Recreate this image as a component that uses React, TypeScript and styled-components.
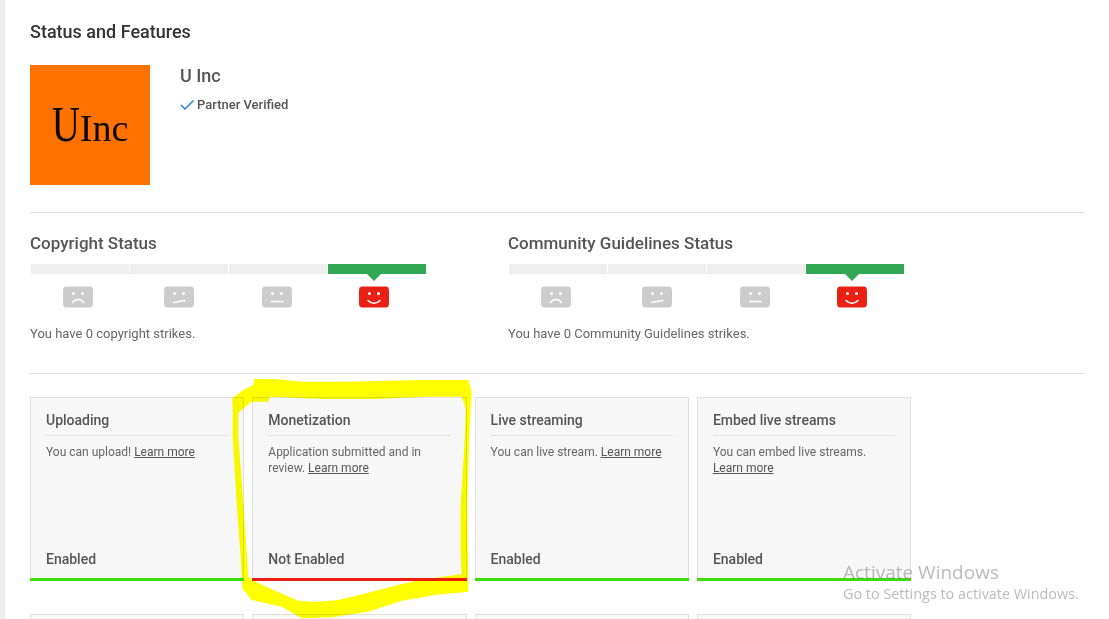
import React from "react";
import styled, { createGlobalStyle } from "styled-components";

const GlobalStyle = createGlobalStyle`
  html, body {
    margin: 0;
    padding: 0;
    height: 619px;
    overflow: hidden;
    background: #fff;
    font-family: Roboto, "Liberation Sans", sans-serif;
    color: #555;
  }
`;

const Page = styled.div`
  position: relative;
  width: 1109px;
  height: 619px;
  overflow: hidden;
  box-sizing: border-box;
  border-left: 5px solid #eeeeee;
  padding: 0 25px 0 25px;
`;

const PageTitle = styled.h1`
  margin: 0;
  padding-top: 22px;
  font-size: 18px;
  line-height: 20px;
  font-weight: 500;
  color: #333;
`;

const Profile = styled.div`
  display: flex;
  gap: 30px;
  margin-top: 23px;
  padding-bottom: 27px;
  border-bottom: 1px solid #e0e0e0;
`;

const Logo = styled.div`
  width: 120px;
  height: 120px;
  background: #ff7200;
  display: flex;
  align-items: baseline;
  justify-content: center;
  padding-top: 37px;
  box-sizing: border-box;
  font-family: "Liberation Serif", serif;
  color: #0a0500;
  line-height: 52px;
`;

const LogoBig = styled.span`
  display: inline-block;
  font-size: 39px;
  transform: scaleY(1.3);
  transform-origin: 50% 38px;
`;

const LogoSmall = styled.span`
  font-size: 38px;
`;

const ProfileInfo = styled.div`
  padding-top: 1px;
`;

const ChannelName = styled.div`
  font-size: 18px;
  line-height: 20px;
  font-weight: 500;
  color: #555;
`;

const Verified = styled.div`
  display: flex;
  align-items: center;
  gap: 3px;
  margin-top: 10px;
  font-size: 13px;
  line-height: 18px;
  font-weight: 500;
  color: #555;
`;

const StatusRow = styled.div`
  display: grid;
  grid-template-columns: 478px 1fr;
  padding-top: 20px;
  height: 140px;
  border-bottom: 1px solid #e0e0e0;
`;

const StatusTitle = styled.h2`
  margin: 0;
  font-size: 17px;
  line-height: 20px;
  font-weight: 500;
  color: #555;
`;

const Meter = styled.div`
  display: grid;
  grid-template-columns: repeat(4, 98px);
  gap: 1px;
  margin: 11px 0 0 1px;
`;

const Segment = styled.div<{ $active?: boolean }>`
  position: relative;
  height: 10px;
  background: ${(p) => (p.$active ? "#33a854" : "#eeeeee")};

  ${(p) =>
    p.$active &&
    `&::after {
      content: "";
      position: absolute;
      left: 39px;
      top: 10px;
      border-left: 7px solid transparent;
      border-right: 7px solid transparent;
      border-top: 7px solid #33a854;
    }`}
`;

const Faces = styled.div`
  display: flex;
  margin-top: 12px;
  height: 22px;
`;

const Face = styled.svg<{ $gap: number }>`
  width: 30px;
  height: 22px;
  margin-left: ${(p) => p.$gap}px;
  flex: none;
`;

const StatusText = styled.p`
  margin: 18px 0 0;
  font-size: 13px;
  line-height: 16px;
  color: #666;
`;

const Cards = styled.div`
  display: grid;
  grid-template-columns: repeat(4, 214.3px);
  gap: 33px 8px;
  margin-top: 23px;
`;

const Card = styled.div`
  box-sizing: border-box;
  height: 184px;
  display: flex;
  flex-direction: column;
  padding: 0 15px;
  background: #f7f7f7;
  border: 1px solid #e0e0e0;
  border-bottom: none;
`;

const CardFooter = styled.div<{ $ok: boolean }>`
  margin: auto -16px 0;
  padding: 0 16px 10px;
  font-size: 14px;
  line-height: 18px;
  font-weight: 500;
  color: #555;
  border-bottom: 3px solid ${(p) => (p.$ok ? "#3ddc0a" : "#ee1c12")};
`;

const CardTitle = styled.div`
  padding: 13px 0 6px;
  font-size: 14px;
  line-height: 18px;
  font-weight: 500;
  color: #555;
  border-bottom: 1px solid #e3e3e3;
`;

const CardText = styled.p`
  margin: 8px 0 0;
  font-size: 12px;
  line-height: 16px;
  color: #666;
`;

const LearnMore = styled.a`
  color: #555;
  text-decoration: underline;
  cursor: pointer;
`;

const Highlight = styled.svg`
  position: absolute;
  left: 215px;
  top: 370px;
  width: 280px;
  height: 249px;
  pointer-events: none;
  mix-blend-mode: multiply;
`;

const Watermark = styled.div`
  position: absolute;
  left: 838px;
  top: 561px;
  color: rgba(120, 120, 120, 0.5);
  pointer-events: none;
`;

const WatermarkTitle = styled.div`
  font-family: "Open Sans", "Liberation Sans", sans-serif;
  font-size: 19px;
  line-height: 22px;
`;

const WatermarkText = styled.div`
  font-family: "Open Sans", "Liberation Sans", sans-serif;
  font-size: 14.4px;
  line-height: 20px;
  margin-top: 1px;
  white-space: nowrap;
`;

const FACE_BODY =
  "M3 0.5H27C28.6 0.5 29.6 1.6 29.8 3C30.2 8 30.2 14 29.8 19C29.6 20.4 28.6 21.5 27 21.5H3C1.4 21.5 0.4 20.4 0.2 19C-0.2 14 -0.2 8 0.2 3C0.4 1.6 1.4 0.5 3 0.5Z";

const mouths = [
  "M9.5 16.5C12 12.5 18 12.5 20.5 16.5",
  "M9.5 16.5L21 14.5",
  "M9.5 15.5H21",
  "M9 14.5C12 18 18 18 21 14.5",
];

const faceGaps = [33, 71, 68, 67];

const StrikeFace = ({ index }: { index: number }) => (
  <Face viewBox="0 0 30 22" $gap={faceGaps[index]}>
    <path d={FACE_BODY} fill={index === 3 ? "#ea2014" : "#cccccc"} />
    <circle cx="10.5" cy="7.5" r="1.5" fill="#fff" />
    <circle cx="19.5" cy="7.5" r="1.5" fill="#fff" />
    <path d={mouths[index]} fill="none" stroke="#fff" strokeWidth="1.5" strokeLinecap="round" />
  </Face>
);

const StatusBlock = ({ title, text }: { title: string; text: string }) => (
  <div>
    <StatusTitle>{title}</StatusTitle>
    <Meter>
      <Segment />
      <Segment />
      <Segment />
      <Segment $active />
    </Meter>
    <Faces>
      {[0, 1, 2, 3].map((i) => (
        <StrikeFace key={i} index={i} />
      ))}
    </Faces>
    <StatusText>{text}</StatusText>
  </div>
);

const cards = [
  { title: "Uploading", text: "You can upload! ", status: "Enabled", ok: true },
  { title: "Monetization", text: "Application submitted and in review. ", status: "Not Enabled", ok: false },
  { title: "Live streaming", text: "You can live stream. ", status: "Enabled", ok: true },
  { title: "Embed live streams", text: "You can embed live streams. ", status: "Enabled", ok: true },
];

export default function App() {
  return (
    <Page>
      <GlobalStyle />
      <PageTitle>Status and Features</PageTitle>
      <Profile>
        <Logo>
          <LogoBig>U</LogoBig>
          <LogoSmall>Inc</LogoSmall>
        </Logo>
        <ProfileInfo>
          <ChannelName>U Inc</ChannelName>
          <Verified>
            <svg width="14" height="12" viewBox="0 0 14 12">
              <path d="M1 6L5 10L13.5 1.5" fill="none" stroke="#2a7fc9" strokeWidth="1.5" />
            </svg>
            Partner Verified
          </Verified>
        </ProfileInfo>
      </Profile>
      <StatusRow>
        <StatusBlock title="Copyright Status" text="You have 0 copyright strikes." />
        <StatusBlock title="Community Guidelines Status" text="You have 0 Community Guidelines strikes." />
      </StatusRow>
      <Cards>
        {cards.map((c) => (
          <Card key={c.title}>
            <CardTitle>{c.title}</CardTitle>
            <CardText>
              {c.text}
              <LearnMore>Learn more</LearnMore>
            </CardText>
            <CardFooter $ok={c.ok}>{c.status}</CardFooter>
          </Card>
        ))}
        {cards.map((c) => (
          <Card key={c.title + "-next"} />
        ))}
      </Cards>
      <Highlight viewBox="0 0 840 747">
        <path
          fillRule="evenodd"
          fill="#ffff00"
          d="M37 85L70 60L100 45L103 27L165 27L245 35L365 35L475 33L615 30L745 30L755 65L748 200L742 400L745 665L645 675L545 692L445 725L335 742L245 745L185 710L95 690L67 655L62 560L50 400L38 200L38 120Z
             M65 120L95 95L145 95L150 80L315 87L465 87L615 80L725 80L737 115L735 200L722 400L722 560L725 612L685 618L600 630L545 642L445 668L355 690L285 696L235 692L155 658L100 632L85 620L70 400L55 200L55 130Z"
        />
      </Highlight>
      <Watermark>
        <WatermarkTitle>Activate Windows</WatermarkTitle>
        <WatermarkText>Go to Settings to activate Windows.</WatermarkText>
      </Watermark>
    </Page>
  );
}
